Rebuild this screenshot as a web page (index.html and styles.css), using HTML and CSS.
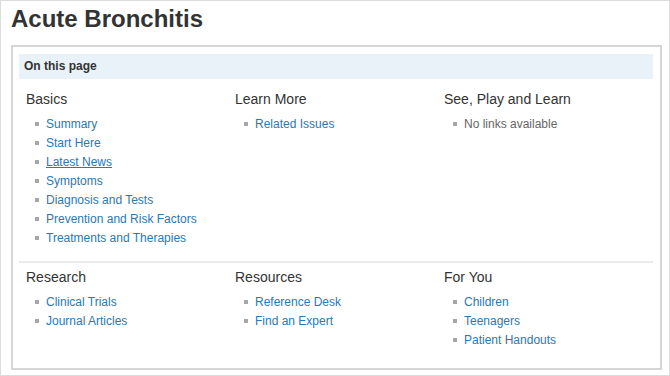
FILE: index.html
```html
<!DOCTYPE html>
<html lang="en">

<head>
    <meta charset="utf-8">
    <meta name="viewport" content="width=device-width, initial-scale=1.0">
    <title>Acute Bronchitis</title>
    <link rel="stylesheet" href="styles.css">
</head>

<body>
    <div class="frame">
        <h1 class="title">Acute Bronchitis</h1>

        <section class="toc">
            <h2 class="toc_bar">On this page</h2>

            <div class="toc_row">
                <div class="toc_col">
                    <h3>Basics</h3>
                    <ul>
                        <li><a href="#">Summary</a></li>
                        <li><a href="#">Start Here</a></li>
                        <li><a href="#" class="hover">Latest News</a></li>
                        <li><a href="#">Symptoms</a></li>
                        <li><a href="#">Diagnosis and Tests</a></li>
                        <li><a href="#">Prevention and Risk Factors</a></li>
                        <li><a href="#">Treatments and Therapies</a></li>
                    </ul>
                </div>
                <div class="toc_col">
                    <h3>Learn More</h3>
                    <ul>
                        <li><a href="#">Related Issues</a></li>
                    </ul>
                </div>
                <div class="toc_col">
                    <h3>See, Play and Learn</h3>
                    <ul>
                        <li class="empty">No links available</li>
                    </ul>
                </div>
            </div>

            <div class="toc_row second">
                <div class="toc_col">
                    <h3>Research</h3>
                    <ul>
                        <li><a href="#">Clinical Trials</a></li>
                        <li><a href="#">Journal Articles</a></li>
                    </ul>
                </div>
                <div class="toc_col">
                    <h3>Resources</h3>
                    <ul>
                        <li><a href="#">Reference Desk</a></li>
                        <li><a href="#">Find an Expert</a></li>
                    </ul>
                </div>
                <div class="toc_col">
                    <h3>For You</h3>
                    <ul>
                        <li><a href="#">Children</a></li>
                        <li><a href="#">Teenagers</a></li>
                        <li><a href="#">Patient Handouts</a></li>
                    </ul>
                </div>
            </div>
        </section>
    </div>
</body>

</html>
```

FILE: styles.css
```css
* {
    box-sizing: border-box;
}

body {
    margin: 0;
    background-color: white;
    font-family: "Liberation Sans", Arial, sans-serif;
    color: #333;
}

.frame {
    width: 670px;
    height: 376px;
    border: 1px solid #dcdcdc;
    padding: 0 7px 0 10px;
    overflow: hidden;
}

.title {
    margin: 4px 0 12px;
    font-size: 24px;
    line-height: 28px;
    font-weight: bold;
    color: #333;
}

.toc {
    border: 2px solid #d6d6d6;
    padding: 7px 7px 0 6px;
    height: 325px;
}

.toc_bar {
    margin: 0;
    height: 25px;
    padding-left: 5px;
    background-color: #e8f2f8;
    font-size: 12px;
    line-height: 25px;
    font-weight: bold;
    color: #333;
}

.toc_row {
    display: grid;
    grid-template-columns: 209px 209px 209px;
    padding: 11px 0 13px 7px;
    border-bottom: 2px solid #ebebeb;
}

.toc_row.second {
    padding-top: 5px;
    border-bottom: none;
}

.toc_col h3 {
    margin: 0 0 7px;
    font-size: 14px;
    line-height: 18px;
    font-weight: normal;
    color: #333;
}

.toc_col ul {
    margin: 0;
    padding: 0;
    list-style: none;
}

.toc_col li {
    padding-left: 9px;
    font-size: 12px;
    line-height: 19px;
}

.toc_col li::before {
    content: "";
    display: inline-block;
    width: 4px;
    height: 4px;
    margin-right: 7px;
    vertical-align: 2px;
    background-color: #a6a6a6;
}

.toc_col a {
    color: #2a78b4;
    text-decoration: none;
}

.toc_col a.hover {
    text-decoration: underline;
}

.empty {
    color: #666;
}
```
